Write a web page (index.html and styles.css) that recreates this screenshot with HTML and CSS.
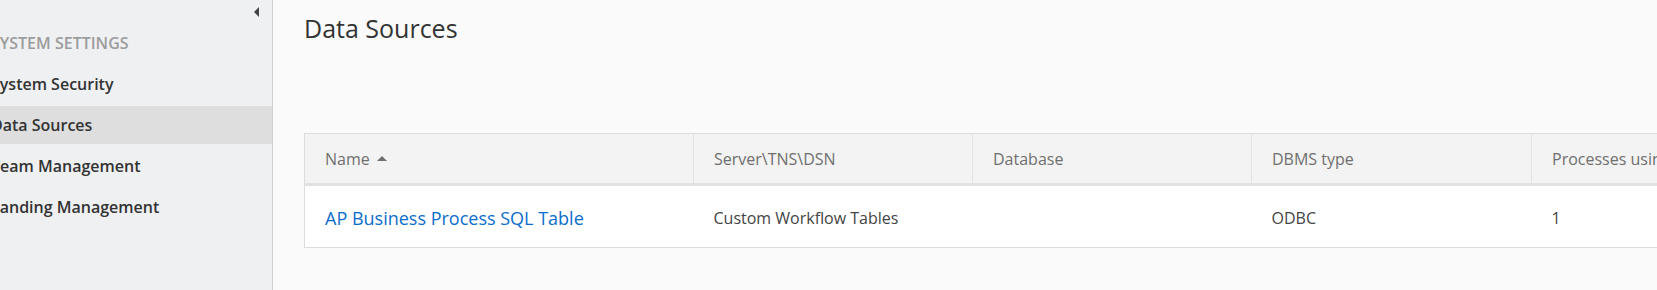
FILE: index.html
```html
<!DOCTYPE html>
<html lang="en">
<head>
  <meta charset="UTF-8">
  <title>Data Sources</title>
  <link rel="stylesheet" href="styles.css">
</head>
<body>
  <aside class="sidebar">
    <div class="collapse-row">
      <span class="collapse-arrow"></span>
    </div>
    <div class="nav-heading">System Settings</div>
    <ul class="nav-list">
      <li><a href="#">System Security</a></li>
      <li class="active"><a href="#">Data Sources</a></li>
      <li><a href="#">Team Management</a></li>
      <li><a href="#">Landing Management</a></li>
    </ul>
  </aside>

  <main class="content">
    <h1 class="page-title">Data Sources</h1>

    <table class="sources-table">
      <thead>
        <tr>
          <th class="col-name">Name <span class="sort-up"></span></th>
          <th class="col-server">Server\TNS\DSN</th>
          <th class="col-db">Database</th>
          <th class="col-type">DBMS type</th>
          <th class="col-procs">Processes using</th>
        </tr>
      </thead>
      <tbody>
        <tr>
          <td><a href="#">AP Business Process SQL Table</a></td>
          <td>Custom Workflow Tables</td>
          <td></td>
          <td>ODBC</td>
          <td>1</td>
        </tr>
      </tbody>
    </table>
  </main>
</body>
</html>
```

FILE: styles.css
```css
html, body {
  margin: 0;
  padding: 0;
  height: 100%;
}

body {
  display: flex;
  font-family: "Open Sans", Arial, sans-serif;
  background: #fafafa;
  color: #333;
  overflow: hidden;
}

.sidebar {
  width: 272px;
  flex-shrink: 0;
  background: #eff0f2;
  border-right: 1px solid #cfd0d2;
  overflow: hidden;
}

.collapse-row {
  height: 30px;
  display: flex;
  justify-content: flex-end;
  align-items: flex-start;
  padding-right: 13px;
}

.collapse-arrow {
  margin-top: 7px;
  width: 0;
  height: 0;
  border-top: 5px solid transparent;
  border-bottom: 5px solid transparent;
  border-right: 5px solid #444;
}

.nav-heading {
  margin-left: -9px;
  height: 26px;
  line-height: 26px;
  font-size: 16px;
  font-weight: 600;
  text-transform: uppercase;
  color: #9c9c9c;
  margin-bottom: 9px;
}

.nav-list {
  list-style: none;
  margin: 0;
  padding: 0;
}

.nav-list li {
  height: 38px;
  margin-bottom: 3px;
}

.nav-list li a {
  display: block;
  margin-left: -9px;
  line-height: 38px;
  font-size: 16px;
  font-weight: 600;
  color: #333;
  text-decoration: none;
  white-space: nowrap;
}

.nav-list li.active {
  background: #dedede;
}

.content {
  flex: 1;
  padding: 10px 0 0 31px;
  min-width: 0;
}

.page-title {
  margin: 0 0 87px;
  font-size: 25px;
  font-weight: 400;
  line-height: 36px;
  color: #333;
}

.sources-table {
  border-collapse: collapse;
  background: #fff;
  border: 1px solid #dcdcdc;
  width: 1460px;
  table-layout: fixed;
  font-size: 16px;
}

.sources-table th {
  background: #f3f3f3;
  color: #6f6f6f;
  font-weight: 400;
  text-align: left;
  height: 49px;
  padding: 0 20px;
  border-left: 1px solid #e2e2e2;
  border-bottom: 3px solid #e2e2e2;
  white-space: nowrap;
  overflow: hidden;
}

.sources-table th:first-child {
  border-left: none;
}

.col-name { width: 348px; }
.col-server { width: 238px; }
.col-db { width: 238px; }
.col-type { width: 239px; }

.sort-up {
  display: inline-block;
  vertical-align: middle;
  margin-left: 3px;
  margin-top: -3px;
  width: 0;
  height: 0;
  border-left: 5px solid transparent;
  border-right: 5px solid transparent;
  border-bottom: 5px solid #6f6f6f;
}

.sources-table td {
  height: 59px;
  padding: 2px 20px 0;
  color: #444;
  white-space: nowrap;
}

.sources-table td a {
  font-size: 18px;
  color: #0b6dcc;
  text-decoration: none;
}
```
